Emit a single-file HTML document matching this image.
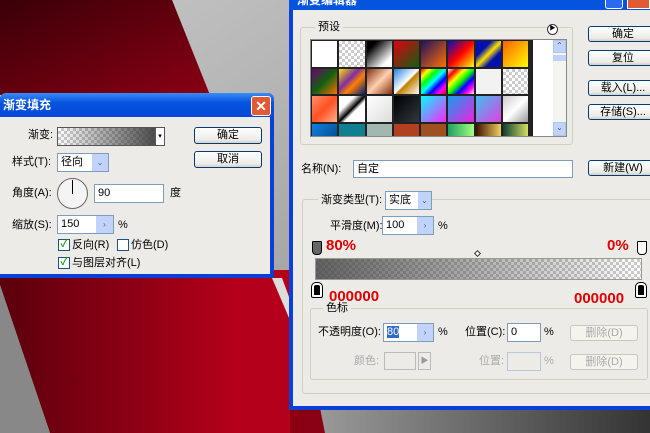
<!DOCTYPE html>
<html><head><meta charset="utf-8"><style>
*{margin:0;padding:0;box-sizing:border-box}
body{width:650px;height:433px;overflow:hidden;position:relative;font-family:"Liberation Sans","Noto Sans CJK SC",sans-serif;font-size:11px;color:#000;background:#999}
.a{position:absolute}
.lbl{position:absolute;font-size:11px;line-height:13px;white-space:nowrap}
.btn{position:absolute;border:1px solid #003c74;border-radius:3px;background:linear-gradient(#fff,#ecebe6 80%,#d6d0c5);text-align:center;font-size:11px;line-height:14px}
.inp{position:absolute;background:#fff;border:1px solid #7f9db9;font-size:11px;line-height:16px;padding-left:3px}
.spin{position:absolute;background:#c1d3fb;border:1px solid #7f9db9;border-left:none;color:#4d6185;font-size:8px;text-align:center}
.cb{position:absolute;width:12px;height:12px;border:1px solid #1c5180;background:#fff;color:#21a121;font-size:10px;line-height:10px;text-align:center;font-weight:bold}
.chk{background-image:linear-gradient(45deg,#ccc 25%,transparent 25%,transparent 75%,#ccc 75%),linear-gradient(45deg,#ccc 25%,#fff 25%,#fff 75%,#ccc 75%);background-size:6px 6px;background-position:0 0,3px 3px}
.grp{position:absolute;border:1px solid #d0d0bf;border-radius:3px}
.red{position:absolute;color:#e00000;font-weight:bold;font-size:15px;line-height:16px}
.sw{float:left;width:27.3px;height:27.5px;border:1px solid #222}
</style></head><body>
<svg class="a" style="left:0;top:0" width="650" height="433">
<defs>
<linearGradient id="r1" x1="0" y1="0" x2="1" y2="1"><stop offset="0" stop-color="#3a0008"/><stop offset="1" stop-color="#8a0014"/></linearGradient>
<linearGradient id="r2" x1="0" y1="0" x2="1" y2="0"><stop offset="0" stop-color="#5a000c"/><stop offset="0.8" stop-color="#b4001a"/></linearGradient>
<linearGradient id="g1" x1="0" y1="0" x2="1" y2="1"><stop offset="0" stop-color="#c8c8c8"/><stop offset="1" stop-color="#8a8a8a"/></linearGradient>
<linearGradient id="g2" x1="0" y1="0" x2="1" y2="0"><stop offset="0" stop-color="#999"/><stop offset="1" stop-color="#333"/></linearGradient>
</defs>
<rect width="650" height="433" fill="url(#g1)"/>
<polygon points="0,0 172,0 210,95 0,95" fill="url(#r1)"/>
<polygon points="0,270 292,270 292,433 50,433 0,285" fill="url(#r2)"/>
<polygon points="272,278 282,278 292,305 292,325" fill="#ddd"/>
<polygon points="0,285 50,433 0,433" fill="#888"/>
<rect x="320" y="408" width="330" height="25" fill="url(#g2)"/>
<polygon points="290,408 320,408 325,433 290,433" fill="#8a0012"/>
</svg>

<div class="a" style="left:0;top:93px;width:274px;height:185px;background:#0a3fd8;border-radius:6px 6px 0 0"></div>
<div class="a" style="left:0;top:93px;width:274px;height:24px;background:linear-gradient(#3a8cf6,#0654e0 40%,#0248d8);border-radius:6px 6px 0 0"></div>
<div class="lbl" style="left:3px;top:98px;color:#fff;font-weight:bold;font-size:12px;line-height:15px">渐变填充</div>
<div class="a" style="left:251px;top:96px;width:20px;height:20px;background:#e25a32;border:1px solid #fff;border-radius:3px;color:#fff;font-size:14px;font-weight:bold;text-align:center;line-height:18px">✕</div>
<div class="a" style="left:0;top:117px;width:270px;height:157px;background:#ecebe8"></div>
<div class="lbl" style="left:28px;top:129px">渐变:</div>
<div class="a chk" style="left:57px;top:127px;width:98px;height:19px;border:1px solid #555"><div style="width:100%;height:100%;background:linear-gradient(90deg,rgba(80,80,80,0),rgba(60,60,60,.9))"></div></div>
<div class="a" style="left:155px;top:127px;width:10px;height:19px;background:#fff;border:1px solid #555;font-size:7px;text-align:center;line-height:17px">▾</div>
<div class="btn" style="left:194px;top:127px;width:68px;height:17px">确定</div>
<div class="btn" style="left:194px;top:151px;width:68px;height:17px">取消</div>
<div class="lbl" style="left:12px;top:156px">样式(T):</div>
<div class="inp" style="left:57px;top:153px;width:52px;height:19px;line-height:17px;border-color:#7f9db9">径向</div>
<div class="spin" style="left:92px;top:154px;width:16px;height:17px;line-height:17px;border:none">⌄</div>
<div class="lbl" style="left:12px;top:187px">角度(A):</div>
<div class="a" style="left:57px;top:178px;width:31px;height:31px;border-radius:50%;border:1px solid #666;background:#f4f4f4"></div>
<div class="a" style="left:72px;top:180px;width:1px;height:14px;background:#000"></div>
<div class="inp" style="left:94px;top:184px;width:70px;height:19px">90</div>
<div class="lbl" style="left:170px;top:187px">度</div>
<div class="lbl" style="left:12px;top:219px">缩放(S):</div>
<div class="inp" style="left:57px;top:215px;width:43px;height:19px;border-right:none">150</div>
<div class="spin" style="left:96px;top:215px;width:18px;height:19px;line-height:17px;border-top:1px solid #7f9db9">›</div>
<div class="lbl" style="left:118px;top:219px">%</div>
<div class="cb" style="left:58px;top:239px">✓</div>
<div class="lbl" style="left:72px;top:239px">反向(R)</div>
<div class="cb" style="left:117px;top:239px"></div>
<div class="lbl" style="left:131px;top:239px">仿色(D)</div>
<div class="cb" style="left:58px;top:257px">✓</div>
<div class="lbl" style="left:72px;top:257px">与图层对齐(L)</div>

<div class="a" style="left:289px;top:0;width:361px;height:410px;background:#0a3fd8"></div>
<div class="a" style="left:289px;top:0;width:361px;height:10px;background:#0554e0"></div>
<div class="lbl" style="left:297px;top:-6px;color:#fff;font-weight:bold;font-size:12px">渐变编辑器</div>
<div class="a" style="left:605px;top:0;width:18px;height:9px;background:#2a6af0;border:1px solid #fff;border-top:none;border-radius:0 0 3px 3px"></div>
<div class="a" style="left:627px;top:0;width:23px;height:9px;background:#e25a32;border:1px solid #fff;border-top:none"></div>
<div class="a" style="left:293px;top:10px;width:357px;height:396px;background:#ecebe8"></div>

<div class="grp" style="left:300px;top:27px;width:273px;height:118px"></div>
<div class="lbl" style="left:315px;top:21px;background:#ecebe8;padding:0 3px">预设</div>
<div class="a" style="left:547px;top:24px;width:11px;height:11px;border-radius:50%;border:1px solid #333;background:#fff;font-size:6px;line-height:9px;text-align:center">▶</div>
<div class="a" style="left:310px;top:39px;width:257px;height:98px;background:#fff;border:1px solid #888;overflow:hidden">
<div style="width:222px;height:98px;background:#222">
<div class="sw" style="background:#fff"></div>
<div class="sw chk"></div>
<div class="sw" style="background:linear-gradient(135deg,#000 20%,#fff 80%)"></div>
<div class="sw" style="background:linear-gradient(135deg,#e00010,#106010)"></div>
<div class="sw" style="background:linear-gradient(135deg,#201060,#ff7000)"></div>
<div class="sw" style="background:linear-gradient(135deg,#0010c0,#ff0000 50%,#ffff00)"></div>
<div class="sw" style="background:linear-gradient(135deg,#0010b0 30%,#ffe000 50%,#0010b0 70%)"></div>
<div class="sw" style="background:linear-gradient(135deg,#ff6000,#ffff00)"></div>
<div class="sw" style="background:linear-gradient(135deg,#700070,#106010 50%,#ff7000)"></div>
<div class="sw" style="background:linear-gradient(135deg,#ffe000,#8030a0 40%,#ff8000 60%,#002080)"></div>
<div class="sw" style="background:linear-gradient(135deg,#803010,#ffd0b0 50%,#803010)"></div>
<div class="sw" style="background:linear-gradient(135deg,#2080e0,#fff 50%,#c08000 55%,#fff)"></div>
<div class="sw" style="background:linear-gradient(135deg,#f00,#ff0,#0f0,#0ff,#00f,#f0f,#f00)"></div>
<div class="sw" style="background:linear-gradient(135deg,#eee,#f00,#ff0,#0f0,#00f,#f0f,#eee)"></div>
<div class="sw" style="background:#f2f2f2"></div>
<div class="sw chk" style="background-color:#aaa"></div>
<div class="sw" style="background:linear-gradient(135deg,#ff9070,#ff5020 50%,#ffb090)"></div>
<div class="sw" style="background:linear-gradient(135deg,#fff 30%,#000 50%,#fff 60%)"></div>
<div class="sw" style="background:linear-gradient(135deg,#fff,#ddd)"></div>
<div class="sw" style="background:linear-gradient(135deg,#000,#303840)"></div>
<div class="sw" style="background:linear-gradient(135deg,#00ffff,#ff20ff)"></div>
<div class="sw" style="background:linear-gradient(135deg,#10a0f0,#f020e0)"></div>
<div class="sw" style="background:linear-gradient(135deg,#40c0f0,#e040e0)"></div>
<div class="sw" style="background:linear-gradient(135deg,#ccc,#fff 50%,#999)"></div>
<div class="sw" style="background:linear-gradient(135deg,#1080e0,#004080)"></div>
<div class="sw" style="background:#108090"></div>
<div class="sw" style="background:#a0b8b0"></div>
<div class="sw" style="background:#b04020"></div>
<div class="sw" style="background:#a05020"></div>
<div class="sw" style="background:linear-gradient(90deg,#20a060,#a0ff80)"></div>
<div class="sw" style="background:linear-gradient(90deg,#401000,#f0d060)"></div>
<div class="sw" style="background:linear-gradient(90deg,#104030,#d0e060)"></div>
</div></div>
<div class="a" style="left:553px;top:40px;width:13px;height:96px;background:#f4f4f0"></div>
<div class="a" style="left:553px;top:40px;width:13px;height:13px;background:#c1d3fb;border:1px solid #b0c4ee;font-size:8px;text-align:center;color:#4d6185">⌃</div>
<div class="a" style="left:553px;top:55px;width:13px;height:6px;background:#c1d3fb"></div>
<div class="a" style="left:553px;top:122px;width:13px;height:14px;background:#c1d3fb;border:1px solid #b0c4ee;font-size:8px;text-align:center;color:#4d6185">⌄</div>

<div class="btn" style="left:588px;top:26px;width:70px;height:16px">确定</div>
<div class="btn" style="left:588px;top:50px;width:70px;height:16px">复位</div>
<div class="btn" style="left:588px;top:80px;width:70px;height:16px">载入(L)...</div>
<div class="btn" style="left:588px;top:104px;width:70px;height:16px">存储(S)...</div>
<div class="btn" style="left:588px;top:160px;width:70px;height:16px">新建(W)</div>
<div class="lbl" style="left:301px;top:163px">名称(N):</div>
<div class="inp" style="left:353px;top:160px;width:220px;height:18px">自定</div>

<div class="grp" style="left:302px;top:199px;width:355px;height:195px"></div>
<div class="lbl" style="left:318px;top:194px;background:#ecebe8;padding:0 3px">渐变类型(T):</div>
<div class="inp" style="left:385px;top:191px;width:47px;height:19px;line-height:17px">实底</div>
<div class="spin" style="left:418px;top:192px;width:13px;height:17px;line-height:17px;border:none">⌄</div>
<div class="lbl" style="left:330px;top:220px">平滑度(M):</div>
<div class="inp" style="left:382px;top:216px;width:38px;height:19px;border-right:none">100</div>
<div class="spin" style="left:417px;top:216px;width:17px;height:19px;line-height:17px;border-top:1px solid #7f9db9">›</div>
<div class="lbl" style="left:438px;top:220px">%</div>
<div class="a" style="left:312px;top:241px;width:10px;height:14px;background:#666;border:1px solid #000;border-radius:1px 1px 4px 4px"></div>
<div class="a" style="left:637px;top:241px;width:10px;height:14px;background:#fff;border:1px solid #000;border-radius:1px 1px 4px 4px"></div>
<div class="red" style="left:326px;top:238px">80%</div>
<div class="red" style="left:607px;top:238px">0%</div>
<div class="a" style="left:475px;top:251px;width:5px;height:5px;border:1px solid #333;transform:rotate(45deg);background:#fff"></div>
<div class="a chk" style="left:315px;top:258px;width:327px;height:22px;border:1px solid #999"><div style="width:100%;height:100%;background:linear-gradient(90deg,rgba(70,70,70,.85),rgba(70,70,70,0))"></div></div>
<div class="a" style="left:312px;top:283px;width:10px;height:14px;background:#000;border:2px solid #fff;outline:1px solid #000;border-radius:4px 4px 1px 1px"></div>
<div class="a" style="left:636px;top:283px;width:10px;height:14px;background:#000;border:2px solid #fff;outline:1px solid #000;border-radius:4px 4px 1px 1px"></div>
<div class="red" style="left:329px;top:289px">000000</div>
<div class="red" style="left:574px;top:291px">000000</div>

<div class="grp" style="left:310px;top:308px;width:338px;height:72px"></div>
<div class="lbl" style="left:323px;top:302px;background:#ecebe8;padding:0 3px">色标</div>
<div class="lbl" style="left:318px;top:326px">不透明度(O):</div>
<div class="inp" style="left:383px;top:323px;width:35px;height:19px;border-right:none"><span style="background:#316ac5;color:#fff">80</span></div>
<div class="spin" style="left:417px;top:323px;width:17px;height:19px;line-height:17px;border-top:1px solid #7f9db9">›</div>
<div class="lbl" style="left:438px;top:326px">%</div>
<div class="lbl" style="left:465px;top:326px">位置(C):</div>
<div class="inp" style="left:507px;top:323px;width:34px;height:19px">0</div>
<div class="lbl" style="left:544px;top:326px">%</div>
<div class="btn" style="left:570px;top:325px;width:68px;height:16px;color:#aaa;border-color:#c9c7ba;background:#f4f3ee">删除(D)</div>
<div class="lbl" style="left:354px;top:355px;color:#aaa">颜色:</div>
<div class="a" style="left:384px;top:352px;width:32px;height:18px;border:1px solid #bbb"></div>
<div class="a" style="left:418px;top:352px;width:13px;height:18px;border:1px solid #bbb;color:#999;font-size:8px;text-align:center;line-height:16px">▶</div>
<div class="lbl" style="left:479px;top:355px;color:#aaa">位置:</div>
<div class="a" style="left:507px;top:352px;width:34px;height:19px;border:1px solid #b8c8d8"></div>
<div class="lbl" style="left:544px;top:355px;color:#aaa">%</div>
<div class="btn" style="left:570px;top:354px;width:68px;height:16px;color:#aaa;border-color:#c9c7ba;background:#f4f3ee">删除(D)</div>
</body></html>
